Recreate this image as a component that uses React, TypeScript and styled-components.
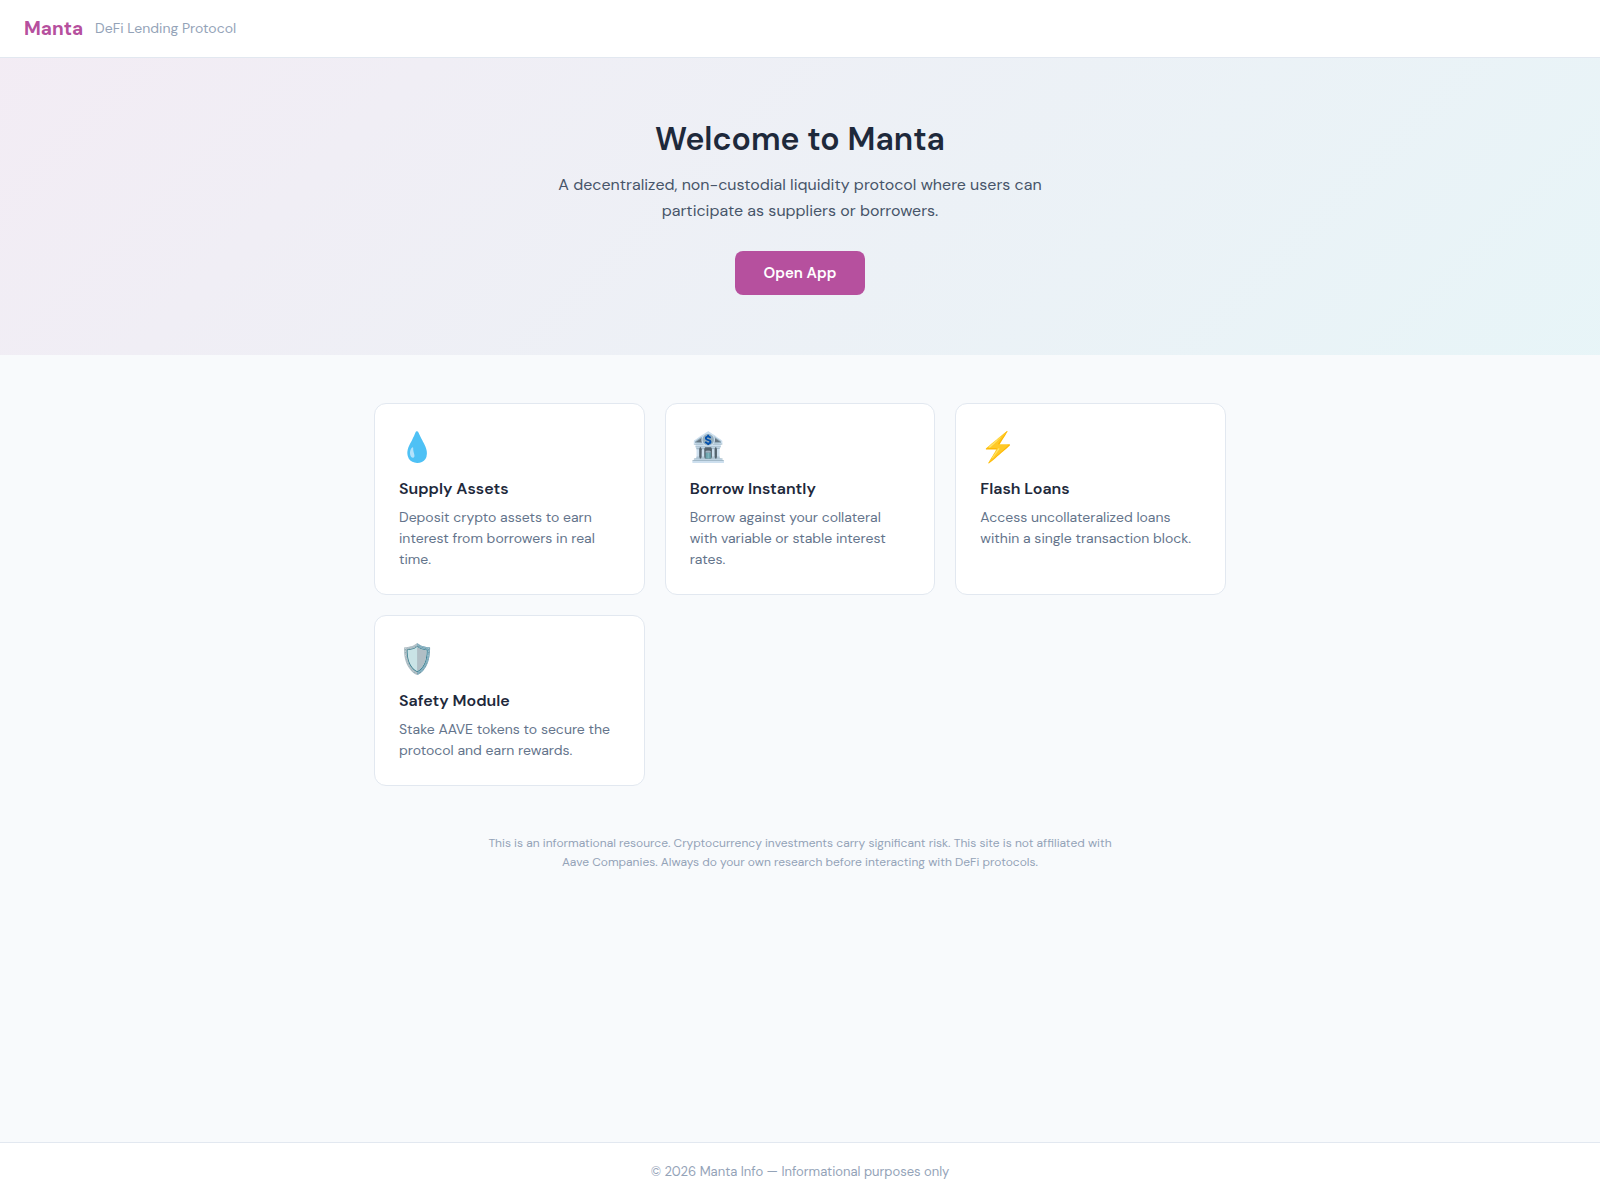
import React from "react";
import styled, { createGlobalStyle } from "styled-components";

const GlobalStyle = createGlobalStyle`
  *, *::before, *::after { box-sizing: border-box; }
  body {
    margin: 0;
    background: #f8fafc;
    color: #1e293b;
    font-family: "DM Sans", Inter, "Liberation Sans", sans-serif;
  }
  h1, h2, p { margin: 0; }
`;

const Page = styled.div`
  min-height: 100vh;
  display: flex;
  flex-direction: column;
`;

const Header = styled.header`
  display: flex;
  align-items: center;
  gap: 12px;
  padding: 16px 24px;
  background: #ffffff;
  border-bottom: 1px solid #e2e8f0;
`;

const Brand = styled.span`
  font-size: 19px;
  line-height: 25px;
  font-weight: 700;
  color: #b6509e;
`;

const Tagline = styled.span`
  font-size: 14px;
  line-height: 17px;
  color: #94a3b8;
`;

const Main = styled.main`
  flex: 1;
`;

const Hero = styled.section`
  display: flex;
  flex-direction: column;
  align-items: center;
  padding: 60px 24px;
  text-align: center;
  background: linear-gradient(135deg, #b6509e15, #2ebac615);
`;

const HeroTitle = styled.h1`
  margin-bottom: 12px;
  font-size: 32px;
  line-height: 42px;
  font-weight: 600;
`;

const HeroText = styled.p`
  max-width: 500px;
  margin-bottom: 27px;
  font-size: 16px;
  line-height: 26px;
  color: #475569;
`;

const OpenButton = styled.button`
  padding: 12px 29px;
  border: 0;
  border-radius: 8px;
  background: #b6509e;
  color: #ffffff;
  font-family: inherit;
  font-size: 15px;
  line-height: 20px;
  font-weight: 600;
  cursor: pointer;
`;

const Features = styled.section`
  display: grid;
  grid-template-columns: repeat(auto-fit, minmax(240px, 1fr));
  gap: 20px;
  max-width: 900px;
  margin: 0 auto;
  padding: 48px 24px;
`;

const Card = styled.article`
  padding: 24px;
  background: #ffffff;
  border: 1px solid #e2e8f0;
  border-radius: 12px;
`;

const CardIcon = styled.div`
  margin-bottom: 12px;
  font-size: 29px;
  line-height: 38px;
`;

const CardTitle = styled.h2`
  margin-bottom: 8px;
  font-size: 16px;
  line-height: 21px;
  font-weight: 600;
`;

const CardText = styled.p`
  font-size: 14px;
  line-height: 21px;
  color: #64748b;
`;

const Disclaimer = styled.p`
  max-width: 700px;
  margin: 0 auto;
  padding: 0 24px 40px;
  text-align: center;
  font-size: 12px;
  line-height: 19px;
  color: #94a3b8;
`;

const Footer = styled.footer`
  padding: 20px 24px;
  background: #ffffff;
  border-top: 1px solid #e2e8f0;
  text-align: center;
  font-size: 13px;
  line-height: 17px;
  color: #94a3b8;
`;

const features = [
  { icon: "💧", title: "Supply Assets", text: "Deposit crypto assets to earn interest from borrowers in real time." },
  { icon: "🏦", title: "Borrow Instantly", text: "Borrow against your collateral with variable or stable interest rates." },
  { icon: "⚡", title: "Flash Loans", text: "Access uncollateralized loans within a single transaction block." },
  { icon: "🛡️", title: "Safety Module", text: "Stake AAVE tokens to secure the protocol and earn rewards." },
];

export default function App() {
  return (
    <Page>
      <GlobalStyle />
      <Header>
        <Brand>Manta</Brand>
        <Tagline>DeFi Lending Protocol</Tagline>
      </Header>
      <Main>
        <Hero>
          <HeroTitle>Welcome to Manta</HeroTitle>
          <HeroText>
            A decentralized, non-custodial liquidity protocol where users can participate as suppliers or borrowers.
          </HeroText>
          <OpenButton type="button">Open App</OpenButton>
        </Hero>
        <Features>
          {features.map((feature) => (
            <Card key={feature.title}>
              <CardIcon aria-hidden="true">{feature.icon}</CardIcon>
              <CardTitle>{feature.title}</CardTitle>
              <CardText>{feature.text}</CardText>
            </Card>
          ))}
        </Features>
        <Disclaimer>
          This is an informational resource. Cryptocurrency investments carry significant risk. This site is not
          affiliated with Aave Companies. Always do your own research before interacting with DeFi protocols.
        </Disclaimer>
      </Main>
      <Footer>© 2026 Manta Info — Informational purposes only</Footer>
    </Page>
  );
}
